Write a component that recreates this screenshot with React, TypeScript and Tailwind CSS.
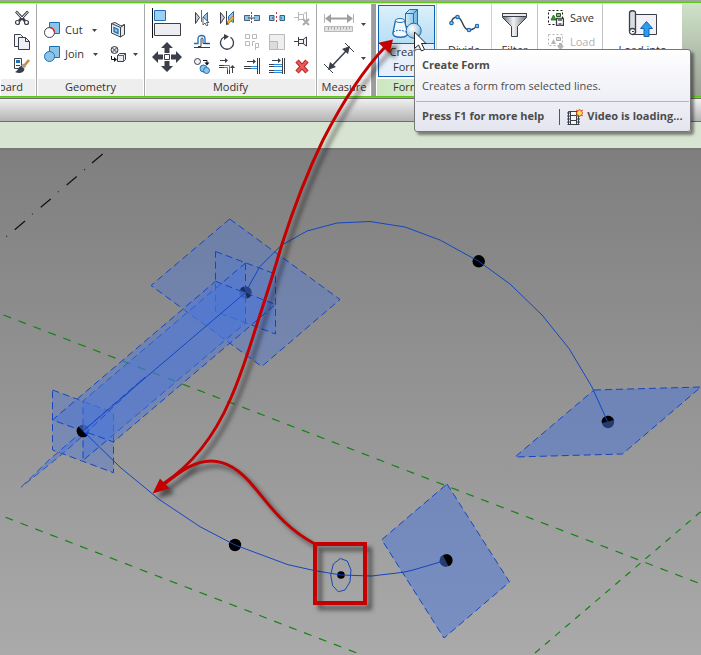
import type { ReactNode } from 'react'

const INK = '#3b3f4a'
const BLUE = '#1d6fb8'
const SKY = '#8cc4e8'
const PALE = '#b9b9b9'
const SCENE_BLUE = '#1546c0'

function Icon({ size = 16, children }: { size?: number; children: ReactNode }) {
  return (
    <svg width={size} height={size} viewBox={`0 0 ${size} ${size}`} fill="none" aria-hidden="true" className="shrink-0">
      {children}
    </svg>
  )
}

function Caret() {
  return (
    <svg width="5" height="3" viewBox="0 0 5 3" aria-hidden="true" className="shrink-0">
      <path d="M0 0h5L2.500 3z" fill="#444" />
    </svg>
  )
}

/* Small 16px tool icons */

const ScissorsIcon = () => (
  <Icon>
    <path d="M2 1.500 11 11M14 1.500 5 11" stroke={INK} strokeWidth="2.600" />
    <path d="M2.500 2 8 8M13.500 2 8 8" stroke="#fff" strokeWidth="1" />
    <circle cx="3.500" cy="12.500" r="2" stroke={INK} strokeWidth="1.200" fill="#fff" />
    <circle cx="12.500" cy="12.500" r="2" stroke={INK} strokeWidth="1.200" fill="#fff" />
  </Icon>
)

const CopyIcon = () => (
  <Icon>
    <path d="M.5.5h6l3 3v9h-9z" fill="#f4f5f8" stroke={INK} />
    <path d="M4.500 3.500h7l4 4v8h-11z" fill="#eef0f5" stroke={INK} />
    <path d="M11.500 3.500v4h4" stroke={INK} />
  </Icon>
)

const BrushIcon = () => (
  <Icon>
    <path d="M.5.5h7v10h-7z" fill="#fff" stroke={INK} />
    <path d="M2 2h4v3H2z" fill={BLUE} />
    <path d="M2 7.500h4" stroke={INK} />
    <path d="m15 2-5 6" stroke="#c98a3a" strokeWidth="2.600" />
    <path d="m10.500 7-2 2" stroke="#9aa0ab" strokeWidth="4" />
    <path d="M7 8c-3 1-2 4-6 6 4 2 9 1 9.500-3z" fill={INK} />
  </Icon>
)

const CutIcon = () => (
  <Icon>
    <path d="M5.500.5h10v11h-10z" fill={SKY} stroke={BLUE} />
    <circle cx="5.500" cy="10.500" r="5" fill="#fff" stroke={INK} />
    <path d="M5.500 5.500a5 5 0 0 1 5 5" stroke="#e02020" strokeWidth="1.300" />
  </Icon>
)

const JoinIcon = () => (
  <Icon>
    <path d="M5.500.5h10v11h-10z" fill={SKY} stroke={BLUE} />
    <circle cx="5.500" cy="10.500" r="5" fill={SKY} stroke={BLUE} />
    <path d="M6 6.500a4 4 0 0 1 4 4.500H6z" fill={SKY} />
  </Icon>
)

const WallOpeningIcon = () => (
  <Icon>
    <path d="M1.500 1.500 5 .5l6 3.500 3.500-1.500v10L10.500 15l-9-4z" fill="#e6e9ef" stroke={INK} />
    <path d="m1.500 1.500 9 4V15M10.500 5.500l4-3" stroke={INK} />
    <path d="m4 5.500 4 2v4l-4-2z" fill={SKY} stroke={BLUE} strokeWidth="1.300" />
  </Icon>
)

const PaintIcon = () => (
  <Icon>
    <circle cx="4.500" cy="4" r="3.500" fill="#e3e3e6" stroke={INK} />
    <path d="m2 1.500 5 5m0-5-5 5" stroke={INK} />
    <path d="M1.500 10v3.500H5" stroke="#111" />
    <path d="m4 11 3 2.500L4 16z" fill="#111" />
    <path d="m7.500 9.500 2-2h6v6l-2 2h-6z" fill="#e9ebf0" stroke={INK} />
    <path d="M7.500 9.500h6v6m0-6 2-2" stroke={INK} strokeWidth=".8" />
  </Icon>
)

const MirrorAxisIcon = () => (
  <Icon>
    <path d="m1.500 2.500 4 5-4 6z" fill="#c9ccd4" stroke={INK} />
    <path d="M7.500 0v12" stroke="#3f8a35" />
    <path d="m13.500 2.500-4 4v3l4 3z" fill={SKY} stroke={BLUE} />
    <path d="M9 7v8l2-2 1.500 3 1.500-1-1.500-2.500H15z" fill="#fff" stroke={INK} strokeWidth=".8" />
  </Icon>
)

const MirrorDrawIcon = () => (
  <Icon>
    <path d="m1.500 2.500 4 5-4 6z" fill="#c9ccd4" stroke={INK} />
    <path d="M7.500 1v13" stroke={INK} />
    <path d="m14.500 1.500-5 5v3l5 3z" fill={SKY} stroke={BLUE} />
    <path d="m14.500 7-6 6" stroke="#c27a1c" strokeWidth="3" />
    <path d="m14 7.500-5 5" stroke="#f4c04a" strokeWidth="1.300" />
    <path d="m7 15 .5-3 2.500 2.500z" fill={INK} />
  </Icon>
)

const SplitIcon = () => (
  <Icon>
    <path d="M.5 5.500h15v5H.5z" fill={SKY} stroke="#4a6078" />
    <path d="M6 5h4v6H6z" fill="#fff" />
    <path d="M7.500 2v12" stroke="#d0352b" strokeDasharray="2 1" />
    <path d="M4 8h7" stroke={INK} />
  </Icon>
)

const SplitGapIcon = () => (
  <Icon>
    <path d="M.5 5.500H5v5H.5zM11 5.500h4.500v5H11z" fill={SKY} stroke="#2d6288" />
    <path d="M7.500 2v12" stroke="#d0352b" strokeDasharray="2 2" />
    <path d="M3 8h1M12 8h1" stroke={INK} />
  </Icon>
)

const UnpinIcon = () => (
  <Icon>
    <path d="M0 7.500h4M4.500 2v9M4.500 4.500h5v5h-5M9.500 4l3-2v10l-3-2" stroke={PALE} />
    <path d="m9 9 6 6m0-6-6 6" stroke="#aaa" strokeWidth="2" />
  </Icon>
)

const OffsetIcon = () => (
  <Icon>
    <path d="M0 9.500h4V4.500c0-4 7-4 7 0v5h5" stroke={BLUE} strokeWidth="1.300" />
    <path d="M0 13.500h16M4 12.500h3V5c0-1.500 2-1.500 2 0v4.500h6" stroke={INK} />
  </Icon>
)

const RotateIcon = () => (
  <Icon>
    <path d="M5 3a6.500 6.500 0 1 0 6.500.3" stroke={INK} strokeWidth="1.300" />
    <path d="m5 0 5 2.500L5 6z" fill={INK} />
  </Icon>
)

const ArrayIcon = () => (
  <Icon>
    <path d="M1.500.5h4v4h-4zM8.500.5h4v4h-4zM1.500 7.500h4v4h-4zM8.500 12V7.500H11M11.500 16V9.500h3v4h-3" stroke={PALE} />
  </Icon>
)

const ScaleIcon = () => (
  <Icon>
    <path d="M.5.500h15v15H.5z" stroke={PALE} fill="#efefef" />
    <path d="M.5 7.500h8v8h-8z" fill="#dcdcdc" stroke={PALE} />
  </Icon>
)

const PinIcon = () => (
  <Icon>
    <path d="M0 7.500h4M4.500 3v9M4.500 5.500h5v4h-5M9.500 5l3-2v9l-3-2z" stroke={INK} fill="#eef0f4" />
  </Icon>
)

const CopyToolIcon = () => (
  <Icon>
    <circle cx="3.500" cy="3.500" r="3" fill="#f2f2f4" stroke={INK} />
    <path d="M9 2.500h4V5" stroke="#111" />
    <path d="m10.500 4.500 2.500 3 2.500-3z" fill="#111" />
    <circle cx="9.500" cy="10.500" r="3.500" fill={SKY} stroke={BLUE} />
    <circle cx="12.500" cy="12.500" r="3" fill={SKY} stroke={BLUE} />
  </Icon>
)

const TrimCornerIcon = () => (
  <Icon>
    <path d="M1 2.500h6" stroke={INK} />
    <path d="m6 0 3 2.500L6 5z" fill={INK} />
    <path d="M0 7.500h5M0 9.500h5M8.500 12v4M10.500 12v4" stroke={INK} />
    <path d="M5 7.500h5.500V12M5 9.500h3.500V12" stroke="#2d8be0" />
    <path d="M13.500 9v6" stroke={INK} />
    <path d="m11 10 2.500-3L16 10z" fill={INK} />
  </Icon>
)

const TrimSingleIcon = () => (
  <Icon>
    <path d="M3 3.500h7" stroke={INK} />
    <path d="m9 1 3 2.500L9 6zM13 0h1v16h-1zM15 0h1v16h-1z" fill={INK} />
    <path d="M0 8.500h7M0 10.500h7" stroke={INK} />
    <path d="M7 8.500h6M7 10.500h6" stroke="#2d8be0" />
  </Icon>
)

const TrimMultipleIcon = () => (
  <Icon>
    <path d="M3 2.500h7" stroke={INK} />
    <path d="m9 0 3 2.500L9 5zM13 0h1v16h-1zM15 0h1v16h-1z" fill={INK} />
    <path d="M0 6.500h5M0 8.500h5M0 12.500h5M0 14.500h5" stroke={INK} />
    <path d="M5 6.500h8M5 8.500h8M5 12.500h8M5 14.500h8" stroke="#2d8be0" />
  </Icon>
)

const DeleteIcon = () => (
  <Icon>
    <path d="m3 3 10 11M13 3 3 14" stroke="#b3262a" strokeWidth="4.500" />
    <path d="m3.500 3.500 9 10M12.500 3.500l-9 10" stroke="#ef5a55" strokeWidth="2.500" />
  </Icon>
)

const SaveSelectionIcon = () => (
  <Icon>
    <path d="M.5.500h14v14H.5z" stroke="#111" strokeDasharray="2 2" />
    <path d="m3 10 2.500-5L8 10z" fill="#3c9a30" stroke="#1e5c18" strokeWidth=".8" />
    <path d="M8.500 3.500h4v3h-4z" fill="#7ccc6c" stroke="#1e5c18" />
    <path d="M8.500 8.500h7v7h-7z" fill="#fff" stroke={INK} strokeWidth="1.300" />
    <path d="M10 8.500h4V11h-4zM10.500 13h3v2.500h-3z" fill="#777" />
  </Icon>
)

const LoadSelectionIcon = () => (
  <Icon>
    <path d="M.5.500h14v11H.5z" stroke="#b5b5b5" strokeDasharray="2 2" />
    <path d="m3 10 2.500-5L8 10z" fill="#b5b5b5" />
    <path d="M8.500 3.500h4v3h-4z" fill="#ddd" stroke="#aaa" />
    <path d="M11 9h3v3h2l-3.500 4L9 12h2z" fill="#b5b5b5" />
  </Icon>
)

const FilmIcon = () => (
  <Icon>
    <path d="M1.500 2.500h10v13h-10z" fill="#f5f5f8" stroke={INK} />
    <path d="M3.500 2v14M9.500 2v14" stroke={INK} />
    <path d="M1.500 3v13M11.500 3v13" stroke={INK} strokeWidth="2" strokeDasharray="2 1" />
    <path d="M3 6.500h7M3 11.500h7" stroke={INK} />
    <path d="m12.500 0 1 2 2-1-1 2 1.500 1-1.500 1 1 2-2-1-1 2-1-2-2 1 1-2-1.500-1 1.500-1-1-2 2 1z" fill="#ffe24a" stroke="#d9481c" strokeWidth=".8" />
  </Icon>
)

/* Large 30px tool icons */

const AlignIcon = () => (
  <Icon size={30}>
    <path d="M.5 0v30" stroke="#111" />
    <path d="M2.500 2.500h11v10h-11z" fill="#9bd0f2" stroke={BLUE} />
    <path d="M2.500 15.500h26v12h-26z" fill="#eceef2" stroke={INK} />
  </Icon>
)

const MoveIcon = () => (
  <Icon size={30}>
    <path d="M15 0l6 6h-3.500v5h-5V6H9zM15 30l6-6h-3.500v-5h-5v5H9zM0 15l6-6v3.500h5v5H6V21zM30 15l-6-6v3.500h-5v5h5V21z" fill={INK} />
    <path d="M12.500 12.500h5v5h-5z" fill="#fff" stroke={INK} />
  </Icon>
)

const RulerIcon = () => (
  <Icon size={30}>
    <path d="M3 9.500h23" stroke="#9e9e9e" strokeWidth="2" />
    <path d="m7 5-6 4.500L7 14zM23 5l6 4.500-6 4.500z" fill="#9e9e9e" />
    <path d="M.5 5v9M29.500 5v9" stroke="#b5b5b5" />
    <path d="M.5 17.500h28v5H.5z" fill="#e2e2e2" stroke={PALE} />
    <path d="M4.500 18v3M7.500 18v2M10.500 18v3M13.500 18v2M16.500 18v3M19.500 18v2M22.500 18v3M25.500 18v2" stroke="#aaa" />
  </Icon>
)

const DimensionIcon = () => (
  <Icon size={30}>
    <path d="M7 24 24 6" stroke={INK} strokeWidth="1.500" />
    <path d="m4 27 2-8 6 5zM26 3l-2 8-6-5z" fill={INK} />
    <path d="m0 21 9 9M21 0l9 9" stroke={INK} />
  </Icon>
)

const CreateFormIcon = () => (
  <Icon size={30}>
    <defs>
      <radialGradient id="ball" cx=".38" cy=".35" r=".75">
        <stop offset="0" stopColor="#fff" />
        <stop offset=".6" stopColor="#b5d3e6" />
        <stop offset="1" stopColor="#6aa5cb" />
      </radialGradient>
      <linearGradient id="box" x1="0" x2="1" y1="0" y2="0">
        <stop offset="0" stopColor="#d3ecfa" />
        <stop offset="1" stopColor="#6db6e2" />
      </linearGradient>
    </defs>
    <path d="m13.500 4.500 4-4h8v17h-12z" fill="url(#box)" stroke={BLUE} />
    <path d="M13.500 4.500h8v12M21.500 4.500l4-4" stroke={BLUE} />
    <path d="M3.500 11.500.8 24.500c1 5 14 5 15 0L12.500 11.500z" fill="#f3f8fc" stroke={BLUE} strokeWidth="1.300" />
    <ellipse cx="8" cy="11.500" rx="4.500" ry="2" fill="#fff" stroke={BLUE} />
    <path d="M1.500 23.500c2-3 9-3 13 0" stroke={BLUE} strokeDasharray="2 1" />
    <circle cx="21.700" cy="21.700" r="7.500" fill="url(#ball)" stroke={BLUE} />
  </Icon>
)

const DivideIcon = () => (
  <Icon size={30}>
    <path d="M2 15C3 11 5 9 8 9c6 0 5 13 12 13 4 0 6-2 8-4" stroke={INK} strokeWidth="1.300" />
    <g fill="#9bd0f2" stroke={BLUE} strokeWidth="1.300">
      <circle cx="2.500" cy="15" r="1.700" />
      <circle cx="8.500" cy="9" r="1.700" />
      <circle cx="20" cy="22" r="1.700" />
      <circle cx="28" cy="18" r="1.700" />
    </g>
  </Icon>
)

const FilterIcon = () => (
  <Icon size={30}>
    <defs>
      <linearGradient id="steel" x1="0" x2="1" y1="0" y2="0">
        <stop offset="0" stopColor="#666b73" />
        <stop offset=".45" stopColor="#f2f3f5" />
        <stop offset="1" stopColor="#70757e" />
      </linearGradient>
    </defs>
    <path d="M2.500 5.500h24v4l-9 9v10h-6v-10l-9-9z" fill="url(#steel)" stroke={INK} />
    <path d="M2.500 5.500h24v3h-24z" fill="#e8eaee" stroke={INK} />
  </Icon>
)

const LoadIntoIcon = () => (
  <Icon size={30}>
    <path d="M7.500 6.500h21v20h-23z" fill="#f1f2f5" stroke={INK} />
    <path d="M1.500 23V5c0-3 6-3 6 0v20" fill="#d9dce2" stroke={INK} strokeWidth="1.300" />
    <circle cx="4.500" cy="23.500" r="3" fill="#fff" stroke={INK} strokeWidth="1.300" />
    <path d="M4 23.500h2" stroke={INK} />
    <path d="m18.500 13.500 6 7h-3.500v8h-5v-8h-3.500z" fill="#2b9bf4" stroke="#1560b0" />
  </Icon>
)

const MODIFY_TOOLS = [
  { label: 'Mirror - Pick Axis', icon: <MirrorAxisIcon /> },
  { label: 'Mirror - Draw Axis', icon: <MirrorDrawIcon /> },
  { label: 'Split Element', icon: <SplitIcon /> },
  { label: 'Split with Gap', icon: <SplitGapIcon /> },
  { label: 'Unpin', icon: <UnpinIcon /> },
  { label: 'Offset', icon: <OffsetIcon /> },
  { label: 'Rotate', icon: <RotateIcon /> },
  { label: 'Array', icon: <ArrayIcon /> },
  { label: 'Scale', icon: <ScaleIcon /> },
  { label: 'Pin', icon: <PinIcon /> },
  { label: 'Copy', icon: <CopyToolIcon /> },
  { label: 'Trim to Corner', icon: <TrimCornerIcon /> },
  { label: 'Trim Single', icon: <TrimSingleIcon /> },
  { label: 'Trim Multiple', icon: <TrimMultipleIcon /> },
  { label: 'Delete', icon: <DeleteIcon /> },
]

type PanelProps = { title: string; className: string; titleAlign?: string; children: ReactNode }

function Panel({ title, className, titleAlign = 'justify-center', children }: PanelProps) {
  return (
    <section className={`flex shrink-0 flex-col border-r border-[#a9a9a9] bg-white ${className}`}>
      <div className="flex h-[75px] items-start">{children}</div>
      <h2 className={`mx-px flex h-[17px] overflow-hidden bg-[#eeeeee] leading-4 whitespace-nowrap ${titleAlign}`}>
        {title}
      </h2>
    </section>
  )
}

function Ribbon() {
  return (
    <header className="flex border-t border-b border-[#5cc814] bg-gradient-to-b from-[#cfe3c8] to-[#9aa096] pt-px">
      {/* first panel is scrolled half out of view, so its title hugs the right */}
      <Panel title="board" className="w-[37px]" titleAlign="justify-end pr-3">
        <div className="flex flex-col gap-2 pt-[6px] pl-[14px]">
          <button aria-label="Cut to Clipboard"><ScissorsIcon /></button>
          <button aria-label="Copy to Clipboard"><CopyIcon /></button>
          <button aria-label="Match Type"><BrushIcon /></button>
        </div>
      </Panel>

      <Panel title="Geometry" className="w-[108px]">
        <div className="flex w-[66px] flex-col gap-2 pt-[18px] pl-[7px]">
          <button className="flex h-4 items-center gap-[5px]">
            <CutIcon /> Cut <span className="pl-1"><Caret /></span>
          </button>
          <button className="flex h-4 items-center gap-[5px]">
            <JoinIcon /> Join <span className="pl-1"><Caret /></span>
          </button>
        </div>
        <div className="flex flex-col gap-2 pt-[18px] pl-[7px]">
          <button aria-label="Wall Opening"><WallOpeningIcon /></button>
          <button aria-label="Paint" className="flex items-center gap-[7px]">
            <PaintIcon /> <Caret />
          </button>
        </div>
      </Panel>

      <Panel title="Modify" className="w-[172px]">
        <div className="flex flex-col gap-1 pt-1 pl-[7px]">
          <button aria-label="Align"><AlignIcon /></button>
          <button aria-label="Move"><MoveIcon /></button>
        </div>
        <div className="grid grid-cols-5 gap-x-[9px] gap-y-2 pt-[6px] pl-3">
          {MODIFY_TOOLS.map((tool) => (
            <button key={tool.label} aria-label={tool.label}>{tool.icon}</button>
          ))}
        </div>
      </Panel>

      <Panel title="Measure" className="w-[55px]">
        <div className="flex flex-col gap-1 pt-[5px] pl-[7px]">
          <button aria-label="Measure" className="flex items-center gap-[7px]">
            <RulerIcon /> <Caret />
          </button>
          <button aria-label="Dimension" className="flex items-center gap-[7px]">
            <DimensionIcon /> <Caret />
          </button>
        </div>
      </Panel>

      <div className="w-1 shrink-0 bg-[#9c9c9c]" />

      <section className="flex w-[61px] shrink-0 flex-col border-r border-[#c9d6c4] bg-white pl-px">
        <div className="h-[75px] pt-px pl-px">
          <button className="flex h-[72px] w-[57px] flex-col items-center border border-[#0f63b5] bg-[#e6effa]">
            <span className="flex h-[38px] w-full shrink-0 justify-center border-b border-[#0f63b5] bg-gradient-to-b from-[#dcf0fb] to-[#b7def5] pt-[3px]">
              <CreateFormIcon />
            </span>
            <span className="leading-[15px]">Create<br />Form</span>
          </button>
        </div>
        <h2 className="h-[17px] bg-gradient-to-r from-[#cbe6c0] to-[#dff0d8] text-center leading-4">Form</h2>
      </section>

      <div className="flex w-[55px] shrink-0 justify-center border-r border-[#c9d6c4] bg-white pt-1">
        <button className="flex h-14 flex-col items-center gap-1">
          <DivideIcon /> Divide
        </button>
      </div>
      <div className="flex w-[46px] shrink-0 justify-center border-r border-[#c4c4c4] bg-white pt-1">
        <button className="flex h-14 flex-col items-center gap-1">
          <FilterIcon /> Filter
        </button>
      </div>
      <div className="flex w-[65px] shrink-0 flex-col gap-2 border-r border-[#c4c4c4] bg-white pt-[6px] pl-[10px]">
        <button className="flex h-4 items-center gap-[6px]">
          <SaveSelectionIcon /> Save
        </button>
        <button disabled className="flex h-4 items-center gap-[6px] text-[#b3b3b3]">
          <LoadSelectionIcon /> Load
        </button>
      </div>
      <div className="flex w-[79px] shrink-0 justify-center bg-white pt-1">
        <button className="flex h-14 flex-col items-center gap-1 whitespace-nowrap">
          <LoadIntoIcon /> Load into
        </button>
      </div>
    </header>
  )
}

function Tooltip() {
  return (
    <aside
      role="tooltip"
      className="absolute top-[49px] left-[414px] w-[277px] rounded-[3px] border border-[#767676] bg-gradient-to-b from-white to-[#e4e5f0] px-px text-[#4c4c4c] shadow-[3px_3px_3px_rgba(0,0,0,0.45)]"
    >
      <h3 className="px-[6px] pt-[6px] leading-[18px] font-bold">Create Form</h3>
      <p className="px-[6px] pt-[3px] pb-[6px] leading-[18px] whitespace-nowrap">Creates a form from selected lines.</p>
      <div className="flex h-[30px] items-center border-t border-[#b5b5bb] px-[6px] font-bold whitespace-nowrap">
        <span>Press F1 for more help</span>
        <span className="mr-[7px] ml-[15px] h-4 border-l border-[#555]" />
        <FilmIcon />
        <span className="pl-1">Video is loading...</span>
      </div>
    </aside>
  )
}

const CONTROL_POINTS = [
  [478.7, 261.3],
  [608, 422],
  [445.7, 560.7],
  [235, 545],
  [83, 431],
  [245.5, 292.5],
]

function Scene() {
  return (
    <main className="min-h-[500px] flex-1 overflow-hidden bg-gradient-to-b from-[#7f7f7f] to-[#aaaaaa]">
      <svg width="701" height="505" viewBox="0 150 701 505" fill="none" role="img" aria-label="3D view">
        <path
          d="M102.700 154 92 163M84.800 169.400l-.6.6M76.700 176.500l-10 8.500M58.600 191.500l-.6.500M50.700 199l-10 8.300M32.600 213.800l-.6.500M25 221l-10.300 8.700M7 236l-.6.600"
          stroke="#111"
          strokeWidth="1.200"
        />
        <g stroke="#148214" strokeWidth="1.200" strokeDasharray="8 8">
          <path d="M3.500 315 701 584" />
          <path d="M5.500 517.300 362 655" />
          <path d="M535 653 701 511.500" strokeDasharray="6.500 6.700" />
        </g>

        {/* dots sit under the translucent work planes */}
        {CONTROL_POINTS.map(([x, y]) => (
          <circle key={x} cx={x} cy={y} r="6.200" fill="#000" />
        ))}
        <circle cx="341" cy="575" r="3.800" fill="#000" />

        <g fill="#4a76dc" fillOpacity=".4" stroke={SCENE_BLUE} strokeDasharray="7 4">
          <path d="M229.700 219 340 299.500l-78.300 67L151 285.500z" />
          <path d="M594 390 701 387l-78.500 67L515 457z" fillOpacity=".5" />
          <path d="M447 484l62.500 98-65.500 56-62.300-98.300z" fillOpacity=".5" />
          <path d="M215.500 251.500l60 22.500v60l-60-22.500z" fillOpacity=".3" />
          <path d="M52.500 390l61 22.700v60l-61-22.700z" />
          <path d="M245.500 263v60L83 460.500V401z" fillOpacity=".45" />
          <path d="M215.500 281.300l60 23.200L113.500 442l-61-22z" fillOpacity=".45" />
          <path d="M21.300 487 50 459l33-28 62-54-60 57-25 22z" fillOpacity=".5" strokeOpacity=".8" />
        </g>

        {/* parts of the dots that stand in front of a plane */}
        <g fill="#000">
          <path d="M601.800 423a6.200 6.200 0 0 1 12-3z" />
          <path d="M443 555.200a6.200 6.200 0 1 1 5.500 11z" />
          <path d="M78.500 426.500a6.200 6.200 0 0 0 9 9L83 431z" />
          <path d="M245.500 292.500l-5.500-3a6.200 6.200 0 0 1 4-3zM245.500 292.500l5.500 3a6.200 6.200 0 0 1-4 3z" fillOpacity=".5" />
        </g>

        <g stroke={SCENE_BLUE}>
          <path d="M83 431 245.500 292.500 259.500 267 281 245.500 307 231 337 223 370 221.500 405 227 440 240 478.700 261.300 510 284 542 315 569 348.500 592 387 607.500 421.500" />
          <path d="M83 431 121 468 160 500 200 526.700 235 545 288 564.700 315 570.700 341 575 371.700 576 403 572.300 413 570 442 561.500" />
          <path d="M340.300 558.500l7 2.500 3.700 9-1 11.700-5 8.300-6.700 1.700-5.600-6-2-10.700 2.600-11z" />
        </g>
      </svg>
    </main>
  )
}

function Annotations() {
  return (
    <svg
      width="701"
      height="655"
      viewBox="0 0 701 655"
      fill="none"
      aria-hidden="true"
      className="pointer-events-none absolute top-0 left-0"
    >
      <g className="drop-shadow-[5px_5px_2px_rgba(0,0,0,0.5)]">
        <g stroke="#c40000" strokeWidth="3">
          <path d="M386 46C364 69 342 103 323 140 306 175 293 210 281.700 245 273 275 266 297 256.700 325 249 350 240 378 230 400 214 437 190 466 163 484" />
          <path d="M315 544C283 527 268 503 254 487 238 467 224 461 211 461c-16 0-29 9-48 24" />
          <path d="M315 544h50v59h-50z" strokeWidth="4" />
        </g>
        <path d="M393 39.500 378.500 42.700 389.500 53.500zM152.700 493.500l7.300-15 9.500 10z" fill="#c40000" />
      </g>
      {/* mouse pointer */}
      <path d="M414.500 32v16.500l4-3.500 3 6 3-1.500-3-6h4.500z" fill="#fff" stroke="#222" />
    </svg>
  )
}

export default function App() {
  return (
    <div className="relative flex min-h-screen flex-col overflow-hidden bg-[#a3a3a3] pt-[2px] font-['Open_Sans','Noto_Sans',sans-serif] text-[11px] text-[#333]">
      <Ribbon />
      <div className="mt-px h-6 shrink-0 border-y border-[#6e6e6e] bg-gradient-to-b from-[#f0f0f0] to-[#b4b4b4]" />
      <div className="h-7 shrink-0 border-b-2 border-[#777] bg-[#d8e4d2]" />
      <Scene />
      <Tooltip />
      <Annotations />
    </div>
  )
}
